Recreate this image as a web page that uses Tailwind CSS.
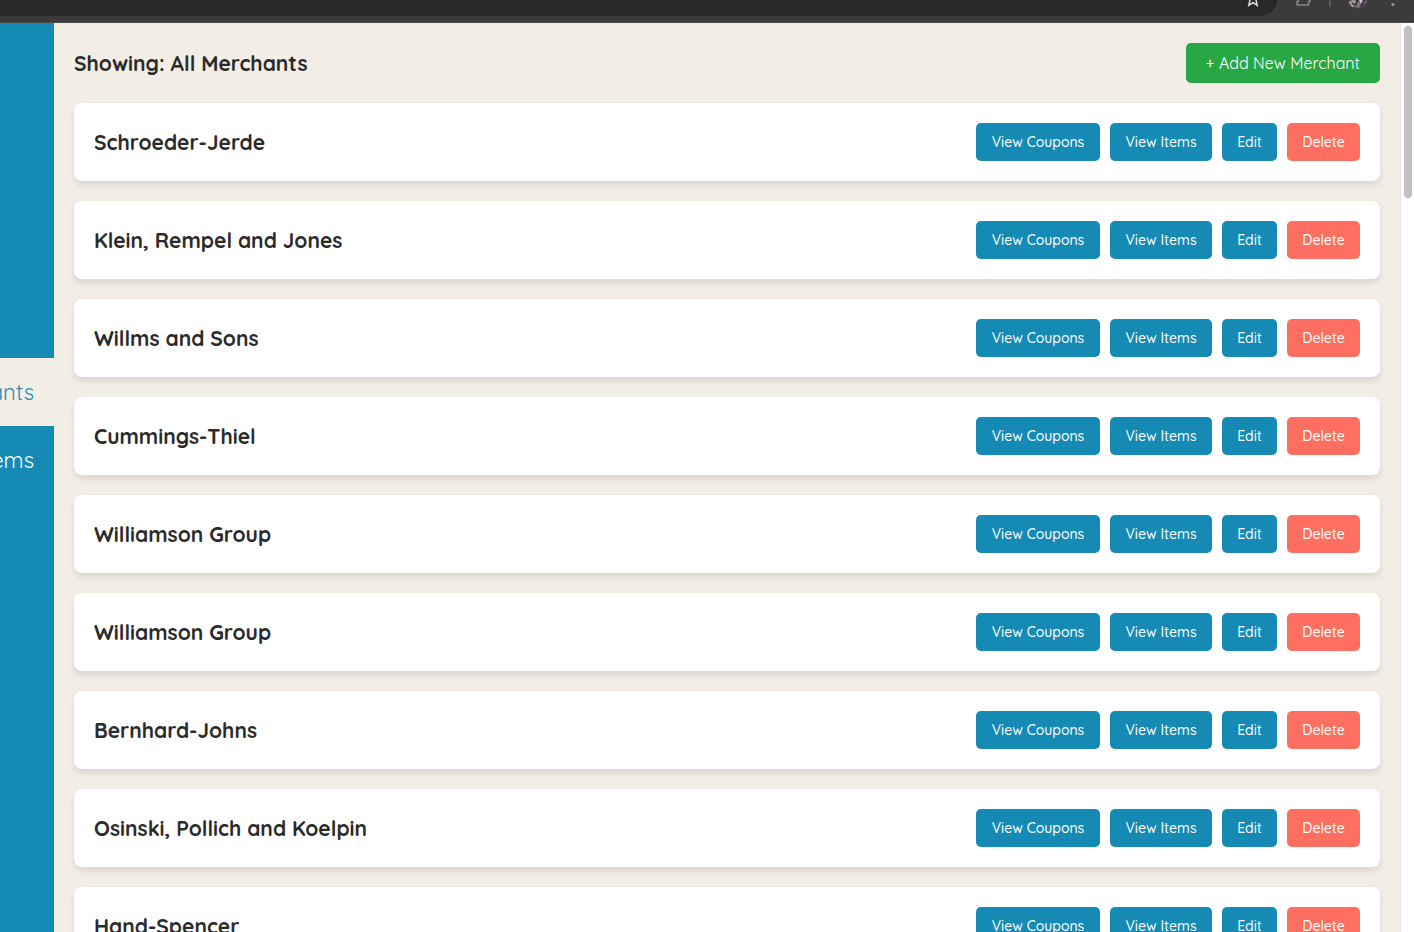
<!DOCTYPE html>
<html lang="en">
<head>
<meta charset="utf-8">
<title>Merchants</title>
<script src="https://cdn.jsdelivr.net/npm/@tailwindcss/browser@4"></script>
</head>
<body class="flex h-screen flex-col overflow-hidden bg-[#f2eee6] font-[Quicksand,Lato,sans-serif] text-[#2b2b2b]">
<header class="flex h-[23px] shrink-0 border-b border-[#4a4a4a] bg-[#3b3b3b]">
  <div class="flex h-4 flex-1 justify-end rounded-br-2xl bg-[#282828] pr-[17px]">
    <svg class="h-2 w-[14px]" viewBox="0 0 14 8" fill="none" stroke="#dedede" stroke-width="1.5"><path d="M1 -3H5L7 -7L9 -3H13L10 0L11.200 5.300L7 2.600L2.800 5.300L4 0Z"/></svg>
  </div>
  <div class="flex h-4 w-[137px] shrink-0">
    <svg class="h-4 w-full" viewBox="0 0 137 16" fill="none">
      <path d="M21.500 -2V1.500H20V5H31.500V1.500H33V-2" stroke="#858585" stroke-width="1.500"/>
      <path d="M53 0V7" stroke="#626262" stroke-width="1.500"/>
      <clipPath id="avatar"><circle cx="81" cy="-1" r="10"/></clipPath>
      <g clip-path="url(#avatar)">
        <path d="M70 0H92V10H70Z" fill="#4b4353"/>
        <path d="M70 3L77 -1L80 2L76 8Z" fill="#9b958b"/>
        <path d="M78 7L81 1L84 3L82 8Z" fill="#82776c"/>
        <path d="M82 0L86 -1L84 4Z" fill="#cbd0cd"/>
        <path d="M75 3L78 5M80 0L79 5M85 5L88 2" stroke="#252a2f" stroke-width="1.500"/>
        <path d="M86 4L90 1" stroke="#754c7a" stroke-width="2"/>
      </g>
      <circle cx="116" cy="4.500" r="1.600" fill="#9a9a9a"/>
    </svg>
  </div>
</header>
<div class="flex min-h-0 flex-1">
  <nav aria-label="Main" class="flex w-[54px] shrink-0 flex-col overflow-hidden bg-[#148ab4] pt-[335px] text-[22px] leading-8">
    <a href="#merchants" aria-current="page" class="flex h-[68px] items-center justify-end bg-[#f2eee6] pr-5 text-[#2b8bb1]">Merchants</a>
    <a href="#items" class="flex h-[68px] items-center justify-end pr-5 text-white">Items</a>
  </nav>
  <main class="min-w-0 flex-1 overflow-hidden p-5">
    <div class="mb-5 flex h-10 items-center justify-between">
      <h1 class="text-[21px] leading-8 font-bold">Showing: All Merchants</h1>
      <button type="button" class="h-10 min-w-[194px] rounded-[5px] bg-[#28a745] px-5 text-[16px] text-white">+ Add New Merchant</button>
    </div>
    <ul id="merchants" class="flex flex-col gap-5"></ul>
  </main>
  <div aria-hidden="true" class="w-[14px] shrink-0 border-l border-[#e9e5dc] bg-white px-[3px] pt-[3px]">
    <div class="h-[172px] w-2 rounded-full bg-[#c1c1c1]"></div>
  </div>
</div>
<script>
const merchants = ["Schroeder-Jerde", "Klein, Rempel and Jones", "Willms and Sons", "Cummings-Thiel", "Williamson Group", "Williamson Group", "Bernhard-Johns", "Osinski, Pollich and Koelpin", "Hand-Spencer"];
document.getElementById("merchants").innerHTML = merchants.map(name => `
  <li class="flex items-center justify-between rounded-lg bg-white p-5 shadow-[0_4px_6px_rgba(0,0,0,0.1)]">
    <h2 class="text-[21px] leading-8 font-bold">${name}</h2>
    <div class="flex gap-[10px] text-[14px] leading-[22px] font-medium text-white">
      <button type="button" class="h-[38px] min-w-[124px] rounded-[5px] bg-[#148ab4] px-[14px]">View Coupons</button>
      <button type="button" class="h-[38px] min-w-[102px] rounded-[5px] bg-[#148ab4] px-[14px]">View Items</button>
      <button type="button" class="h-[38px] min-w-[55px] rounded-[5px] bg-[#148ab4] px-[14px]">Edit</button>
      <button type="button" class="h-[38px] min-w-[73px] rounded-[5px] bg-[#ff6f61] px-[14px]">Delete</button>
    </div>
  </li>`).join("");
</script>
</body>
</html>
